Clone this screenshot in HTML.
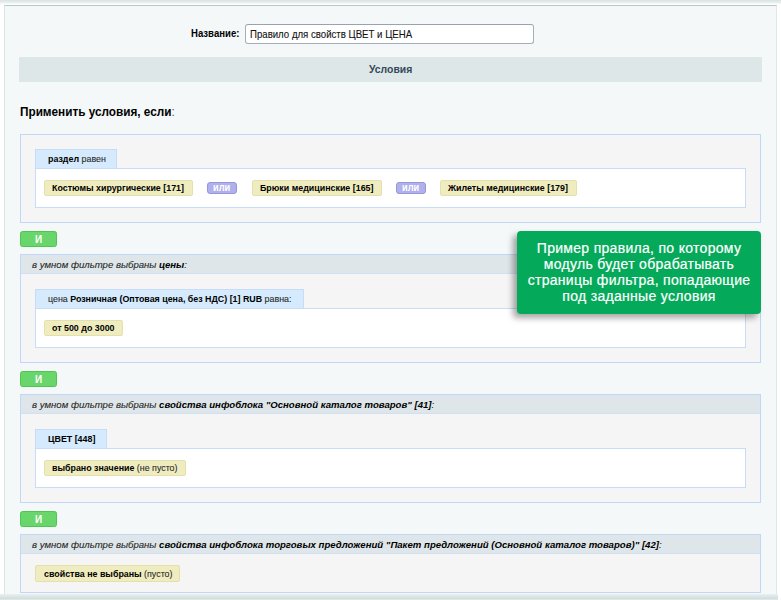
<!DOCTYPE html>
<html><head><meta charset="utf-8">
<style>
*{margin:0;padding:0;box-sizing:border-box}
html,body{width:781px;height:600px;overflow:hidden;background:#fff;font-family:"Liberation Sans",sans-serif;color:#000}
.abs{position:absolute}
.t{position:absolute;display:inline-block;white-space:nowrap;transform-origin:0 0;-webkit-text-stroke:0.1px currentColor}
.t b{-webkit-text-stroke:0}
#topband{left:0;top:0;width:781px;height:4px;background:linear-gradient(#dae3e3,#e8eeee 60%,#fafbfb)}
#panel{left:4px;top:5px;width:773px;height:600px;background:#f4f8f9;border:1px solid #d8e3e3;border-top-color:#b8c8c8;border-right-color:#dde8ea;border-left-color:#dbe6e7}
#bottomband{left:0;top:594px;width:778px;height:6px;background:linear-gradient(#e9efef,#dae4e4 50%,#d2dddd 80%,#e6ecec)}
#name-lbl{left:191px;top:28px;font-weight:bold;font-size:10.3px;transform:scaleX(0.93);-webkit-text-stroke:0}
#inp{left:245px;top:24px;width:289px;height:20px;background:#fff;border:1px solid #a6afb9;border-top-color:#99a2ad;border-radius:3px}
#inp .t{left:4px;top:3px;font-size:10.5px;color:#111;transform:scaleX(0.917)}
#hdr{left:19px;top:57px;width:743px;height:25px;background:#dee7e8}
#hdr .t{left:350px;top:6.5px;font-weight:bold;font-size:10.4px;color:#34495a;-webkit-text-stroke:0}
#title{left:20px;top:105px;font-size:12px;font-weight:bold;transform:scaleX(0.98);-webkit-text-stroke:0}
#title span{font-weight:normal;color:#555}
.blk{left:20px;width:741px;background:#f5f5f5;border:1px solid #c2d7f8}
.bh{position:absolute;left:0;top:0;width:100%;height:19px;background:#dee6e9;border-bottom:1px solid #cfe0f5}
.bh .t{left:11px;top:4px;font-style:italic;font-size:9.6px;color:#262626;transform:scaleX(1)}
.bh b{color:#000}
.tab{position:absolute;left:14px;height:19px;background:#d5eafc;border:1px solid #c6dcf7;border-bottom:none}
.tab .t{left:12px;top:3px;font-size:9.8px;color:#2a2a2a;transform:scaleX(0.905)}
.tab b{color:#000}
.cnt{position:absolute;left:14px;width:711px;background:#fff;border:1px solid #c8dcf7}
.tag{position:absolute;height:16px;background:#efecbf;border:1px solid #e4e0ab;border-radius:2px}
.tag .t{left:7px;top:1px;font-size:9.8px;color:#2a2a2a;transform:scaleX(0.905)}
.tag b{color:#000}
.pill{position:absolute;height:12px;width:30px;background:#b0b0ec;border:1px solid #9797d8;border-radius:3px}
.pill .t{left:5px;top:-2px;font-size:11px;font-weight:bold;color:#fff;transform:scaleX(0.84);-webkit-text-stroke:0}
.btn{left:20px;width:37px;height:16px;background:#69d66b;border:1px solid #4fc652;border-radius:2.5px}
.btn .t{left:14px;top:2px;font-size:10px;font-weight:bold;color:#fff;-webkit-text-stroke:0}
#tip{left:517px;top:231px;width:244px;height:83px;background:#04a95a;border-radius:4px;box-shadow:-4px 4px 6px rgba(0,0,0,0.35);color:#fff;text-align:center;font-size:14px;line-height:16px;letter-spacing:0.3px;padding-top:9px;-webkit-text-stroke:0.2px #fff}
</style></head><body>
<div id="topband" class="abs"></div>
<div id="panel" class="abs"></div>
<div id="bottomband" class="abs"></div>

<div id="name-lbl" class="t">Название:</div>
<div id="inp" class="abs"><span class="t">Правило для свойств ЦВЕТ и ЦЕНА</span></div>
<div id="hdr" class="abs"><span class="t">Условия</span></div>
<div id="title" class="t">Применить условия, если<span>:</span></div>

<!-- block 1 -->
<div class="abs blk" style="top:134px;height:89px">
  <div class="tab" style="top:14px;height:19px;width:82px"><span class="t"><b>раздел</b> равен</span></div>
  <div class="cnt" style="top:33px;height:40px">
    <div class="tag" style="left:8px;top:11px;width:149px"><span class="t"><b>Костюмы хирургические [171]</b></span></div>
    <div class="pill" style="left:171px;top:13px"><span class="t">или</span></div>
    <div class="tag" style="left:216px;top:11px;width:130px"><span class="t"><b>Брюки медицинские [165]</b></span></div>
    <div class="pill" style="left:360px;top:13px"><span class="t">или</span></div>
    <div class="tag" style="left:404px;top:11px;width:137px"><span class="t"><b>Жилеты медицинские [179]</b></span></div>
  </div>
</div>
<div class="abs btn" style="top:231px"><span class="t">И</span></div>

<!-- block 2 -->
<div class="abs blk" style="top:254px;height:109px">
  <div class="bh"><span class="t">в умном фильтре выбраны <b>цены</b>:</span></div>
  <div class="tab" style="top:34px;height:19px;width:269px"><span class="t">цена <b>Розничная (Оптовая цена, без НДС) [1] RUB</b> равна:</span></div>
  <div class="cnt" style="top:53px;height:40px">
    <div class="tag" style="left:8px;top:11px;width:79px"><span class="t"><b>от 500 до 3000</b></span></div>
  </div>
</div>
<div class="abs btn" style="top:371px"><span class="t">И</span></div>

<!-- block 3 -->
<div class="abs blk" style="top:394px;height:109px">
  <div class="bh"><span class="t">в умном фильтре выбраны <b>свойства инфоблока "Основной каталог товаров" [41]</b>:</span></div>
  <div class="tab" style="top:34px;height:19px;width:72px"><span class="t"><b>ЦВЕТ [448]</b></span></div>
  <div class="cnt" style="top:53px;height:40px">
    <div class="tag" style="left:8px;top:11px;width:142px"><span class="t"><b>выбрано значение</b> (не пусто)</span></div>
  </div>
</div>
<div class="abs btn" style="top:511px"><span class="t">И</span></div>

<!-- block 4 -->
<div class="abs blk" style="top:534px;height:59px">
  <div class="bh"><span class="t">в умном фильтре выбраны <b>свойства инфоблока торговых предложений "Пакет предложений (Основной каталог товаров)" [42]</b>:</span></div>
  <div class="tag" style="left:14px;top:30px;width:145px;height:17px"><span class="t" style="left:7.5px;top:1.5px"><b>свойства не выбраны</b> (пусто)</span></div>
</div>

<div id="tip" class="abs">Пример правила, по которому<br>модуль будет обрабатывать<br>страницы фильтра, попадающие<br>под заданные условия</div>
</body></html>
